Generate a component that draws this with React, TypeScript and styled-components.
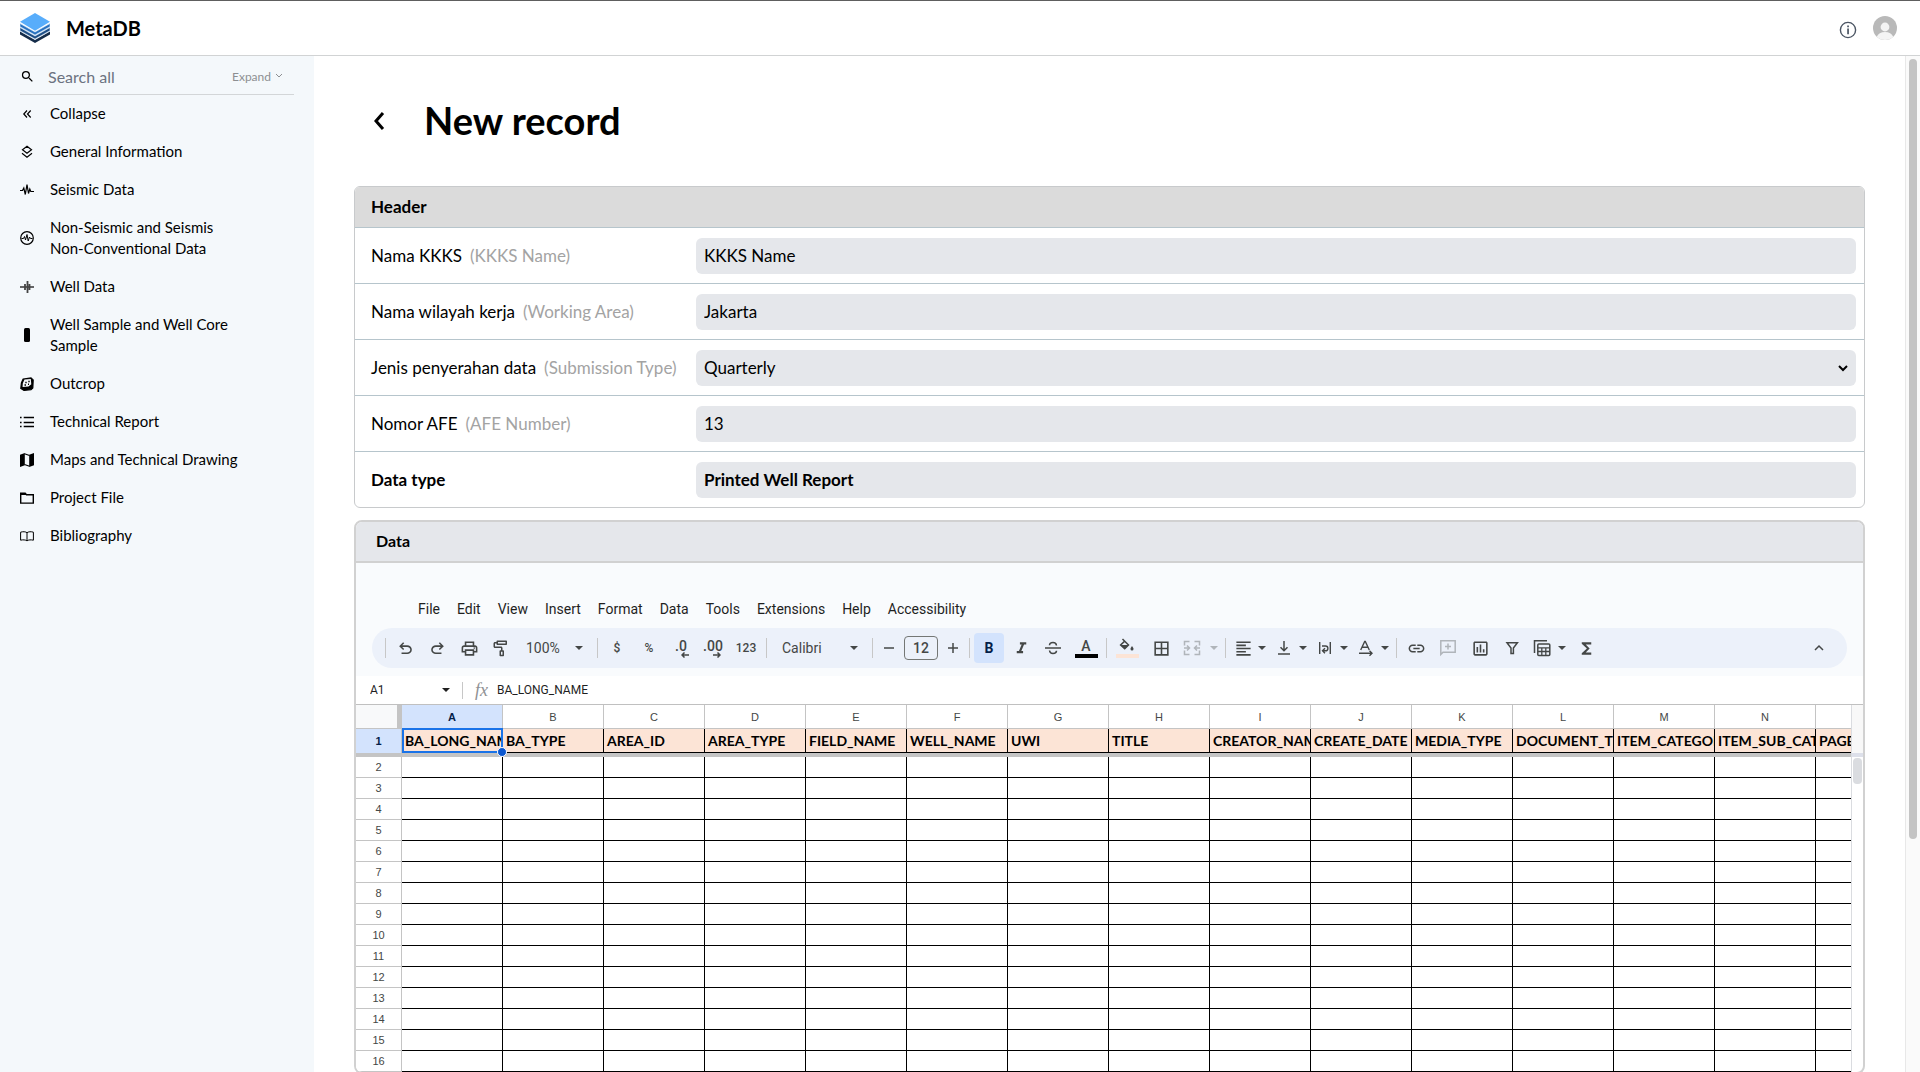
import React from 'react';
import styled, { createGlobalStyle, css } from 'styled-components';
import {
  MdSearch,
  MdOutlineImagesearchRoller,
  MdOutlinePrint,
  MdFormatItalic,
  MdOutlineInsertChart,
  MdFunctions,
  MdBorderAll,
  MdFormatAlignLeft,
  MdLink,
} from 'react-icons/md';

const GlobalStyle = createGlobalStyle`
  *, *::before, *::after { box-sizing: border-box; }
  body { margin: 0; background: #fff; color: #000; font-family: Lato, 'Open Sans', sans-serif; }
  button, input, select { font: inherit; color: inherit; margin: 0; padding: 0; border: 0; background: none; }
  button { cursor: pointer; }
  input:focus, select:focus { outline: none; }
  svg { display: block; flex: none; }
`;

/* ---------- page frame ---------- */

const Page = styled.div`
  display: flex;
  flex-direction: column;
  height: 100vh;
  overflow: hidden;
`;

const TopBar = styled.header`
  flex: none;
  display: flex;
  align-items: center;
  justify-content: space-between;
  height: 56px;
  padding: 0 23px 0 20px;
  border-top: 1px solid #5e5e5e;
  border-bottom: 1px solid #d1d3d4;
`;

const Brand = styled.div`
  display: flex;
  align-items: center;
  gap: 16px;
  font-size: 20px;
  font-weight: 700;
`;

const Account = styled.div`
  display: flex;
  align-items: center;
  gap: 16px;
`;

const PlainButton = styled.button`
  display: flex;
  align-items: center;
  justify-content: center;
`;

const InfoButton = styled(PlainButton)`
  padding-top: 4px;
`;

const Body = styled.div`
  flex: 1;
  display: flex;
  min-height: 0;
`;

/* ---------- sidebar ---------- */

const Sidebar = styled.aside`
  flex: none;
  width: 314px;
  padding: 0 20px;
  background: #f4f8fb;
`;

const SearchRow = styled.div`
  display: flex;
  align-items: center;
  height: 39px;
  padding: 2px 11px 0 0;
  border-bottom: 1px solid #d3d6d8;
`;

const SearchInput = styled.input`
  flex: 1;
  min-width: 0;
  margin-left: 13px;
  font-size: 16px;
  &::placeholder { color: #6b7280; opacity: 1; }
`;

const ExpandButton = styled(PlainButton)`
  gap: 4px;
  font-size: 12px;
  color: #8d8f92;
`;

const NavList = styled.ul`
  display: flex;
  flex-direction: column;
  gap: 1px;
  margin: 0;
  padding: 0;
  list-style: none;
`;

const NavLink = styled.a`
  display: flex;
  align-items: center;
  gap: 16px;
  padding: 8px 0;
  font-size: 15px;
  line-height: 21px;
  color: #000;
  text-decoration: none;
`;

const NavText = styled.span`
  max-width: 200px;
`;

/* ---------- main column ---------- */

const Main = styled.main`
  flex: 1;
  min-width: 0;
  overflow: hidden;
  padding: 35px 40px 0;
`;

const ScrollTrack = styled.div`
  flex: none;
  width: 15px;
  padding: 3px 3px 0;
  border-left: 1px solid #e8e8e8;
  background: #fafafa;
`;

const ScrollThumb = styled.div`
  width: 8px;
  height: 77%;
  border-radius: 4px;
  background: #c4c4c4;
`;

const TitleRow = styled.div`
  display: flex;
  align-items: center;
  gap: 33px;
  height: 60px;
  margin-bottom: 35px;
  padding-left: 13px;
`;

const BackButton = styled(PlainButton)`
  width: 24px;
  height: 24px;
`;

const Title = styled.h1`
  margin: 0;
  padding-bottom: 2px;
  font-size: 38px;
  line-height: 48px;
  font-weight: 700;
`;

const FormCard = styled.form`
  margin-bottom: 12px;
  border: 1px solid #c8cacc;
  border-radius: 6px;
  overflow: hidden;
  font-size: 17px;
`;

const FormHeading = styled.h2`
  margin: 0;
  padding: 0 16px;
  font-size: 17px;
  line-height: 40px;
  font-weight: 700;
  background: #dbdbdb;
`;

const FormRow = styled.div<{ $strong?: boolean }>`
  display: grid;
  grid-template-columns: 325px 1fr;
  align-items: center;
  height: 56px;
  padding: 0 8px 0 16px;
  border-top: 1px solid #b6c5cc;
  font-weight: ${(p) => (p.$strong ? 700 : 400)};
`;

const Hint = styled.span`
  margin-left: 8px;
  color: #a3a3a3;
`;

const field = css`
  width: 100%;
  height: 36px;
  padding: 0 8px;
  border-radius: 6px;
  background: #e5e7eb;
`;

const Field = styled.input`
  ${field}
`;

const SelectWrap = styled.div`
  position: relative;
`;

const SelectField = styled.select`
  ${field}
  display: block;
  appearance: none;
`;

const SelectArrow = styled.span`
  position: absolute;
  top: 14px;
  right: 8px;
  pointer-events: none;
`;

/* ---------- spreadsheet card ---------- */

const DataCard = styled.section`
  border: 2px solid #d1d1d1;
  border-radius: 8px;
  overflow: hidden;
`;

const DataHeading = styled.h2`
  margin: 0;
  padding: 0 20px 2px;
  font-size: 16px;
  line-height: 37px;
  font-weight: 700;
  background: #e5e7eb;
  border-bottom: 2px solid #d1d1d1;
`;

const SheetChrome = styled.div`
  padding: 35px 16px 8px;
  background: #f9fbfd;
  font-family: Roboto, Inter, sans-serif;
  color: #444746;
`;

const MenuBar = styled.nav`
  display: flex;
  gap: 17px;
  height: 30px;
  padding-left: 46px;
  align-items: flex-start;
`;

const MenuButton = styled.button`
  font-size: 14px;
  line-height: 22px;
  color: #1f1f1f;
`;

const Toolbar = styled.div`
  display: flex;
  align-items: center;
  gap: 2px;
  height: 40px;
  padding: 0 13px 0 11px;
  border-radius: 20px;
  background: #ecf1fa;
`;

const Divider = styled.span`
  flex: none;
  width: 1px;
  height: 20px;
  margin: 0 2px;
  background: #c7c7c7;
`;

const Tool = styled.button<{ $w?: number; $on?: boolean; $faded?: boolean }>`
  position: relative;
  flex: none;
  display: flex;
  align-items: center;
  justify-content: center;
  width: ${(p) => p.$w ?? 30}px;
  height: 30px;
  border-radius: 4px;
  font-size: 14px;
  font-weight: 500;
  color: ${(p) => (p.$on ? '#041e49' : '#444746')};
  background: ${(p) => (p.$on ? '#d3e3fd' : 'transparent')};
  opacity: ${(p) => (p.$faded ? 0.35 : 1)};
`;

const DropTool = styled(Tool)<{ $inset?: number }>`
  justify-content: space-between;
  padding: ${(p) => (p.$inset ? `0 10px 0 ${p.$inset}px` : '0 3px 0 4px')};
  font-weight: 400;
`;

const Swatch = styled.span<{ $color: string }>`
  position: absolute;
  left: 50%;
  bottom: 5px;
  width: 23px;
  height: 4px;
  margin-left: -11px;
  background: ${(p) => p.$color};
`;

const Raised = styled.span`
  padding-bottom: 4px;
  line-height: 16px;
`;

const DecimalArrow = styled.svg`
  position: absolute;
  right: 7px;
  bottom: 5px;
`;

const SmallText = styled.span`
  font-size: 12px;
`;

const SizeInput = styled.input`
  width: 34px;
  height: 24px;
  margin: 0 1px;
  border: 1px solid #747775;
  border-radius: 4px;
  text-align: center;
  font-size: 14px;
  font-weight: 500;
`;

const Spacer = styled.span`
  flex: 1;
`;

const FormulaBar = styled.div`
  display: flex;
  align-items: center;
  height: 29px;
  padding: 0 14px;
  border-bottom: 1px solid #c0c0c0;
  font-family: Roboto, Inter, sans-serif;
  font-size: 12px;
  color: #1f1f1f;
`;

const NameInput = styled.input`
  width: 72px;
`;

const FormulaDivider = styled(Divider)`
  height: 17px;
  margin: 0 12px;
`;

const FormulaMark = styled.em`
  width: 22px;
  font-family: 'Liberation Serif', serif;
  font-size: 18px;
  line-height: 20px;
  color: #8f9194;
`;

const FormulaInput = styled.input`
  flex: 1;
`;

const SheetArea = styled.div`
  display: flex;
`;

const GridClip = styled.div`
  flex: 1;
  min-width: 0;
  overflow: hidden;
`;

const Grid = styled.table`
  width: 1561px;
  table-layout: fixed;
  border-collapse: separate;
  border-spacing: 0;
  font-family: 'Liberation Sans', Arial, sans-serif;
  font-size: 11px;
  th, td { padding: 0; }
`;

const Corner = styled.th`
  width: 46px;
  height: 24px;
  background: #f8f9fa;
  border-right: 5px solid #c4c4c4;
  border-bottom: 1px solid #c4c4c4;
`;

const ColumnHead = styled.th<{ $on?: boolean }>`
  width: 101px;
  font-weight: ${(p) => (p.$on ? 700 : 400)};
  color: ${(p) => (p.$on ? '#041e49' : '#444746')};
  background: ${(p) => (p.$on ? '#d3e3fd' : '#fff')};
  border-right: 1px solid #c4c4c4;
  border-bottom: 1px solid #c4c4c4;
`;

const RowHead = styled.th<{ $on?: boolean }>`
  height: ${(p) => (p.$on ? 24 : 21)}px;
  font-weight: ${(p) => (p.$on ? 700 : 400)};
  color: ${(p) => (p.$on ? '#041e49' : '#444746')};
  background: ${(p) => (p.$on ? '#d3e3fd' : '#fff')};
  border-right: 1px solid #c4c4c4;
  border-bottom: ${(p) => (p.$on ? 0 : 1)}px solid #c4c4c4;
`;

const FieldCell = styled.td`
  position: relative;
  background: #fce4d6;
  border-right: 1px solid #000;
  border-bottom: 1px solid #000;
`;

const FieldName = styled.div`
  overflow: hidden;
  padding: 1px 0 0 3px;
  font-family: Lato, sans-serif;
  font-size: 14px;
  line-height: 20px;
  font-weight: 700;
  white-space: nowrap;
  color: #000;
`;

const Selection = styled.span`
  position: absolute;
  inset: -1px -1px -1px 0;
  z-index: 1;
  border: 2px solid #1a73e8;
  &::after {
    content: '';
    position: absolute;
    right: -6px;
    bottom: -6px;
    width: 10px;
    height: 10px;
    border: 1px solid #fff;
    border-radius: 50%;
    background: #0b57d0;
  }
`;

const FreezeBar = styled.td`
  height: 4px;
  background: #c4c4c4;
`;

const Cell = styled.td`
  border-right: 1px solid #000;
  border-bottom: 1px solid #000;
`;

const Rail = styled.div`
  flex: none;
  width: 12px;
  border-left: 1px solid #dadce0;
`;

const RailTop = styled.div`
  height: 52px;
  background: #f8f8f8;
  border-bottom: 4px solid #dde0ea;
`;

const RailThumb = styled.div`
  width: 9px;
  height: 26px;
  margin: 1px;
  border-radius: 4px;
  background: #dadce0;
`;

/* ---------- drawings ---------- */

const Logo = () => (
  <svg width="30" height="30" viewBox="0 0 30 30" aria-hidden="true">
    <path d="M0 18.500v3L15 30l15-8.500v-3L15 27z" fill="#152c4a" />
    <path d="M0 14.500v3.200L15 26l15-8.300v-3.200L15 23z" fill="#1f4f86" stroke="#dcecff" strokeWidth=".6" />
    <path d="M0 10.500v3.200L15 22l15-8.300v-3.200L15 19z" fill="#2a72bf" stroke="#dcecff" strokeWidth=".6" />
    <path d="M15 0 30 8.800 15 17.800 0 8.800z" fill="#58adfb" />
  </svg>
);

const InfoIcon = () => (
  <svg width="18" height="18" viewBox="0 0 18 18" aria-hidden="true">
    <circle cx="9" cy="9" r="7.600" fill="none" stroke="#4b5563" strokeWidth="1.400" />
    <path d="M8.200 4.600h1.700v1.600H8.200zM8.200 7.600h1.700v5.600H8.200z" fill="#4b5563" />
  </svg>
);

const Avatar = () => (
  <svg width="24" height="24" viewBox="0 0 24 24" aria-hidden="true">
    <circle cx="12" cy="12" r="12" fill="#b9b9b9" />
    <circle cx="12" cy="11" r="4.400" fill="#f4f4f4" />
    <path d="M3.800 20.800C5 17.600 8 16 12 16s7 1.600 8.200 4.800A12 12 0 0 1 12 24a12 12 0 0 1-8.200-3.200z" fill="#f4f4f4" />
  </svg>
);

const Chevron = ({ w, h, d, stroke = 1 }: { w: number; h: number; d: string; stroke?: number }) => (
  <svg width={w} height={h} viewBox={`0 0 ${w} ${h}`} fill="none" stroke="currentColor" strokeWidth={stroke} aria-hidden="true">
    <path d={d} />
  </svg>
);

const NavIcon = ({ children }: { children: React.ReactNode }) => (
  <svg width="14" height="14" viewBox="0 0 14 14" fill="none" stroke="#000" strokeWidth="1.200" aria-hidden="true">
    {children}
  </svg>
);

const Caret = () => (
  <svg width="8" height="4" viewBox="0 0 8 4" aria-hidden="true">
    <path d="M0 0h8L4 4z" fill="currentColor" />
  </svg>
);

const Symbol = ({ d }: { d: string }) => (
  <svg width="19" height="19" viewBox="0 -960 960 960" fill="currentColor" aria-hidden="true">
    <path d={d} />
  </svg>
);

const Line = ({ children }: { children: React.ReactNode }) => (
  <svg width="18" height="18" viewBox="0 0 18 18" fill="none" stroke="currentColor" strokeWidth="1.500" aria-hidden="true">
    {children}
  </svg>
);

const UNDO =
  'M280-200v-80h284q63 0 109.500-40T720-420q0-60-46.500-100T564-560H312l104 104-56 56-200-200 200-200 56 56-104 104h252q97 0 166.500 63T800-420q0 94-69.500 157T564-200H280Z';
const REDO =
  'M396-200q-97 0-166.500-63T160-420q0-94 69.500-157T396-640h252L544-744l56-56 200 200-200 200-56-56 104-104H396q-63 0-109.500 40T240-420q0 60 46.500 100T396-280h284v80H396Z';

/* ---------- data ---------- */

const wave = 'M0 7.500h2.500L3.800 5l1.500 6.500L7 1.500l1.500 9L9.800 6l1 2.500H14';

const NAV: { label: string; icon: React.ReactNode }[] = [
  { label: 'Collapse', icon: <path d="M7 3.500 3.800 7 7 10.500M10.700 3.500 7.500 7l3.200 3.500" /> },
  {
    label: 'General Information',
    icon: <path d="M7 1.200 11.500 4.700 7 8.200 2.500 4.700zM2 8.300 7 12.200l5-3.900" strokeWidth="1.200" />,
  },
  { label: 'Seismic Data', icon: <path d={wave} /> },
  {
    label: 'Non-Seismic and Seismis Non-Conventional Data',
    icon: (
      <>
        <circle cx="7" cy="7" r="6.300" />
        <path d="M1.500 7.500h2L4.500 5.500l1 3.500L7 3.500 8.200 10l1.300-4 1 1.500h2" strokeWidth="1" />
      </>
    ),
  },
  {
    label: 'Well Data',
    icon: (
      <>
        <path d="M0 7h14" />
        <path d="M7.500 1v12M5 4v6M9.500 4v6" stroke="#444" strokeWidth="1.800" />
      </>
    ),
  },
  { label: 'Well Sample and Well Core Sample', icon: <rect x="4" y="0" width="6" height="14" rx="1.500" fill="#000" stroke="none" /> },
  {
    label: 'Outcrop',
    icon: (
      <>
        <path d="M3 2.200 11 .9l2.200 2-.4 8-1.800 1.700-7 .8-3.200-2L1.400 6z" fill="#000" />
        <path d="M4.500 2.600 10.800 1.900 11.300 7.200 8.500 9.500 2.600 10 2.800 6.300z" fill="#f4f8fb" stroke="none" />
        <path d="M6 4.800v1.400M9 3.800v1.400M4.500 8h1.500M8 7.300h1" strokeWidth="1.400" />
      </>
    ),
  },
  { label: 'Technical Report', icon: <path d="M0 2.500h1.600M3.700 2.500H14M0 7.500h1.600M3.700 7.500H14M0 11.500h1.600M3.700 11.500H14" strokeWidth="1.400" /> },
  {
    label: 'Maps and Technical Drawing',
    icon: (
      <>
        <path d="M0 1.800 4.800 0v12.200L0 14zM9.200 1.800 14 0v12.200L9.200 14z" fill="#000" stroke="none" />
        <path d="M4.500.8 9.500 2.500M4.500 11.500l5 1.700" />
      </>
    ),
  },
  {
    label: 'Project File',
    icon: <path d="M.7 2.200h4.500l1.300 1.500h6.800v8.400H.7zM.7 3.200h5" strokeWidth="1.400" />,
  },
  {
    label: 'Bibliography',
    icon: <path d="M.6 3.200C3 2.400 5.500 2.600 7 3.700c1.500-1.100 4-1.300 6.400-.5v8c-2.400-.6-4.900-.4-6.400.6-1.500-1-4-1.200-6.400-.6zM7 4v7" strokeWidth="1" />,
  },
];

const MENUS = ['File', 'Edit', 'View', 'Insert', 'Format', 'Data', 'Tools', 'Extensions', 'Help', 'Accessibility'];

const COLUMNS: [string, string][] = [
  ['A', 'BA_LONG_NAME'],
  ['B', 'BA_TYPE'],
  ['C', 'AREA_ID'],
  ['D', 'AREA_TYPE'],
  ['E', 'FIELD_NAME'],
  ['F', 'WELL_NAME'],
  ['G', 'UWI'],
  ['H', 'TITLE'],
  ['I', 'CREATOR_NAME'],
  ['J', 'CREATE_DATE'],
  ['K', 'MEDIA_TYPE'],
  ['L', 'DOCUMENT_TYPE'],
  ['M', 'ITEM_CATEGORY'],
  ['N', 'ITEM_SUB_CATEGORY'],
  ['O', 'PAGES'],
];

const ROWS = Array.from({ length: 15 }, (_, i) => i + 2);

/* ---------- sections ---------- */

const SideNav = () => (
  <Sidebar>
    <SearchRow>
      <MdSearch size={15} />
      <SearchInput aria-label="Search all" placeholder="Search all" />
      <ExpandButton type="button">
        Expand
        <Chevron w={8} h={6} d="M1 1l3 3 3-3" />
      </ExpandButton>
    </SearchRow>
    <NavList>
      {NAV.map(({ label, icon }) => (
        <li key={label}>
          <NavLink href="#">
            <NavIcon>{icon}</NavIcon>
            <NavText>{label}</NavText>
          </NavLink>
        </li>
      ))}
    </NavList>
  </Sidebar>
);

const HeaderForm = () => (
  <FormCard>
    <FormHeading>Header</FormHeading>
    <FormRow>
      <label htmlFor="kkks">
        Nama KKKS<Hint>(KKKS Name)</Hint>
      </label>
      <Field id="kkks" defaultValue="KKKS Name" />
    </FormRow>
    <FormRow>
      <label htmlFor="area">
        Nama wilayah kerja<Hint>(Working Area)</Hint>
      </label>
      <Field id="area" defaultValue="Jakarta" />
    </FormRow>
    <FormRow>
      <label htmlFor="submission">
        Jenis penyerahan data<Hint>(Submission Type)</Hint>
      </label>
      <SelectWrap>
        <SelectField id="submission" defaultValue="Quarterly">
          <option>Quarterly</option>
        </SelectField>
        <SelectArrow>
          <Chevron w={10} h={8} d="M1 2l4 4 4-4" stroke={2} />
        </SelectArrow>
      </SelectWrap>
    </FormRow>
    <FormRow>
      <label htmlFor="afe">
        Nomor AFE<Hint>(AFE Number)</Hint>
      </label>
      <Field id="afe" defaultValue="13" />
    </FormRow>
    <FormRow $strong>
      <label htmlFor="datatype">Data type</label>
      <Field id="datatype" defaultValue="Printed Well Report" readOnly />
    </FormRow>
  </FormCard>
);

const SheetToolbar = () => (
  <Toolbar role="toolbar">
    <Divider />
    <Tool aria-label="Undo"><Symbol d={UNDO} /></Tool>
    <Tool aria-label="Redo"><Symbol d={REDO} /></Tool>
    <Tool aria-label="Print"><MdOutlinePrint size={19} /></Tool>
    <Tool aria-label="Paint format"><MdOutlineImagesearchRoller size={18} /></Tool>
    <DropTool $w={75} $inset={8}>100%<Caret /></DropTool>
    <Divider />
    <Tool><SmallText>$</SmallText></Tool>
    <Tool><SmallText>%</SmallText></Tool>
    <Tool>
      <Raised>.0</Raised>
      <DecimalArrow width="8" height="6" viewBox="0 0 8 6" fill="none" stroke="currentColor" strokeWidth="1.500">
        <path d="M8 3H1M3.500.5 1 3l2.500 2.500" />
      </DecimalArrow>
    </Tool>
    <Tool>
      <Raised>.00</Raised>
      <DecimalArrow width="8" height="6" viewBox="0 0 8 6" fill="none" stroke="currentColor" strokeWidth="1.500">
        <path d="M0 3h7M4.500.5 7 3 4.500 5.500" />
      </DecimalArrow>
    </Tool>
    <Tool $w={32}><SmallText>123</SmallText></Tool>
    <Divider />
    <DropTool $w={97} $inset={11}>Calibri<Caret /></DropTool>
    <Divider />
    <Tool $w={24} aria-label="Decrease font size"><Line><path d="M4 9h10" /></Line></Tool>
    <SizeInput aria-label="Font size" defaultValue="12" />
    <Tool $w={24} aria-label="Increase font size"><Line><path d="M4 9h10M9 4v10" /></Line></Tool>
    <Divider />
    <Tool $on><b>B</b></Tool>
    <Tool aria-label="Italic"><MdFormatItalic size={19} /></Tool>
    <Tool aria-label="Strikethrough">
      <Line><path d="M1 9h16M12.500 6.500C12.300 4.500 11 3.500 9 3.500S5.500 4.500 5.500 6.300M5.500 11.500c.2 2 1.500 3 3.500 3s3.500-1 3.500-2.700" /></Line>
    </Tool>
    <Tool $w={32}><Raised>A</Raised><Swatch $color="#000" /></Tool>
    <Divider />
    <Tool $w={32} aria-label="Fill color">
      <Raised>
        <Line>
          <path d="M4.500 2 10.500 8 6.700 11.800 2.600 8 7 3.900" />
          <path d="M2.800 8h7.600L6.600 12z" fill="currentColor" stroke="none" />
          <path d="M14 9c-1 1.500-1.500 2.200-1.500 2.900a1.500 1.500 0 0 0 3 0c0-.7-.5-1.400-1.500-2.900z" fill="currentColor" stroke="none" />
        </Line>
      </Raised>
      <Swatch $color="#fce4d6" />
    </Tool>
    <Tool $w={32} aria-label="Borders"><MdBorderAll size={19} /></Tool>
    <DropTool $w={42} $faded aria-label="Merge cells">
      <Line><path d="M6.500 2.500h-5v4M11.500 2.500h5v4M6.500 15.500h-5v-4M11.500 15.500h5v-4M1 9h5M4 6.500 6.500 9 4 11.500M17 9h-5M14 6.500 11.500 9l2.500 2.500" /></Line>
      <Caret />
    </DropTool>
    <Divider />
    <DropTool $w={39} aria-label="Horizontal align"><MdFormatAlignLeft size={19} /><Caret /></DropTool>
    <DropTool $w={39} aria-label="Vertical align">
      <Line><path d="M3 15h12M9 2v9.500M5.500 8.300 9 11.800l3.500-3.500" /></Line>
      <Caret />
    </DropTool>
    <DropTool $w={39} aria-label="Text wrapping">
      <Line><path d="M3.700 3v12M14.300 3v12M6 7h3.500a2.400 2.400 0 0 1 0 4.800H7M9 9.300 6.500 11.800 9 14.300" strokeWidth="1.400" /></Line>
      <Caret />
    </DropTool>
    <DropTool $w={39} aria-label="Text rotation">
      <Line><path d="M3.700 11 7.700 2.500h.6L12.300 11M5 8.300h6M2 14.300h13M12.500 11.800l2.500 2.500-2.500 2.500" strokeWidth="1.400" /></Line>
      <Caret />
    </DropTool>
    <Divider />
    <Tool aria-label="Insert link"><MdLink size={19} /></Tool>
    <Tool $faded aria-label="Insert comment">
      <Line><path d="M1.800 15.500V1.800h14.400v11.400H4zM9 4.500v6M6 7.500h6" /></Line>
    </Tool>
    <Tool aria-label="Insert chart"><MdOutlineInsertChart size={19} /></Tool>
    <Tool aria-label="Filter">
      <Line><path d="M4 3.800h10.400L10.400 9v5.500H8V9z" /></Line>
    </Tool>
    <DropTool $w={40} aria-label="Table views">
      <Line>
        <path d="M1.500 14V1.800H14" />
        <rect x="4.800" y="5" width="12" height="11.500" rx="1" />
        <path d="M5 8.800h12M5 12.500h12M8.800 9v7.500M12.800 9v7.500" strokeWidth="1.300" />
      </Line>
      <Caret />
    </DropTool>
    <Tool aria-label="Functions"><MdFunctions size={19} /></Tool>
    <Spacer />
    <Tool aria-label="Hide the menus"><Chevron w={10} h={8} d="M1 6l4-4 4 4" stroke={1.5} /></Tool>
  </Toolbar>
);

const SheetGrid = () => (
  <SheetArea>
    <GridClip>
      <Grid>
        <thead>
          <tr>
            <Corner />
            {COLUMNS.map(([letter], i) => (
              <ColumnHead key={letter} $on={i === 0} scope="col">
                {letter}
              </ColumnHead>
            ))}
          </tr>
        </thead>
        <tbody>
          <tr>
            <RowHead $on scope="row">1</RowHead>
            {COLUMNS.map(([letter, name], i) => (
              <FieldCell key={letter}>
                <FieldName>{name}</FieldName>
                {i === 0 && <Selection />}
              </FieldCell>
            ))}
          </tr>
          <tr>
            <FreezeBar colSpan={16} />
          </tr>
          {ROWS.map((n) => (
            <tr key={n}>
              <RowHead scope="row">{n}</RowHead>
              {COLUMNS.map(([letter]) => (
                <Cell key={letter} />
              ))}
            </tr>
          ))}
        </tbody>
      </Grid>
    </GridClip>
    <Rail>
      <RailTop />
      <RailThumb />
    </Rail>
  </SheetArea>
);

export default function App() {
  return (
    <>
      <GlobalStyle />
      <Page>
        <TopBar>
          <Brand>
            <Logo />
            <span>MetaDB</span>
          </Brand>
          <Account>
            <InfoButton type="button" aria-label="Information"><InfoIcon /></InfoButton>
            <PlainButton type="button" aria-label="Account"><Avatar /></PlainButton>
          </Account>
        </TopBar>
        <Body>
          <SideNav />
          <Main>
            <TitleRow>
              <BackButton type="button" aria-label="Back">
                <Chevron w={12} h={18} d="M10 1 3 9l7 8" stroke={3} />
              </BackButton>
              <Title>New record</Title>
            </TitleRow>
            <HeaderForm />
            <DataCard>
              <DataHeading>Data</DataHeading>
              <SheetChrome>
                <MenuBar>
                  {MENUS.map((m) => (
                    <MenuButton key={m} type="button">{m}</MenuButton>
                  ))}
                </MenuBar>
                <SheetToolbar />
              </SheetChrome>
              <FormulaBar>
                <NameInput aria-label="Name box" defaultValue="A1" />
                <Caret />
                <FormulaDivider />
                <FormulaMark>fx</FormulaMark>
                <FormulaInput aria-label="Formula" defaultValue="BA_LONG_NAME" />
              </FormulaBar>
              <SheetGrid />
            </DataCard>
          </Main>
          <ScrollTrack>
            <ScrollThumb />
          </ScrollTrack>
        </Body>
      </Page>
    </>
  );
}
